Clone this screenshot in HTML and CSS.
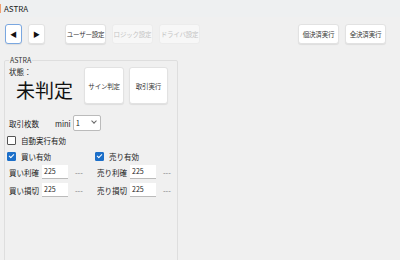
FILE: index.html
```html
<!DOCTYPE html>
<html lang="ja">
<head>
    <meta charset="UTF-8">
    <title>ASTRA</title>
    <link rel="stylesheet" href="styles.css">
</head>
<body>
    <div class="titlebar"><span class="mark"></span>ASTRA</div>
    <div class="toolbar">
        <button class="btn nav focus">&#9664;</button>
        <button class="btn nav">&#9654;</button>
        <button class="btn tool first">ユーザー設定</button>
        <button class="btn tool" disabled>ロジック設定</button>
        <button class="btn tool" disabled>ドライバ設定</button>
        <button class="btn tool right">個決済実行</button>
        <button class="btn tool">全決済実行</button>
    </div>
    <fieldset class="group">
        <legend>ASTRA</legend>
        <div class="top">
            <div class="state">
                <div class="label">状態：</div>
                <div class="big">未判定</div>
            </div>
            <button class="btn square">サイン判定</button>
            <button class="btn square">取引実行</button>
        </div>
        <div class="row lots">
            <span class="label">取引枚数</span>
            <span class="mini">mini</span>
            <span class="select">1<span class="arrow"></span></span>
        </div>
        <div class="row check auto"><span class="box"></span>自動実行有効</div>
        <div class="cols">
            <div class="col">
                <div class="row check"><span class="box on"></span>買い有効</div>
                <div class="row field"><span class="label">買い利確</span><span class="input">225</span><span class="dots">---</span></div>
                <div class="row field"><span class="label">買い損切</span><span class="input">225</span><span class="dots">---</span></div>
            </div>
            <div class="col">
                <div class="row check"><span class="box on"></span>売り有効</div>
                <div class="row field"><span class="label">売り利確</span><span class="input">225</span><span class="dots">---</span></div>
                <div class="row field"><span class="label">売り損切</span><span class="input">225</span><span class="dots">---</span></div>
            </div>
        </div>
    </fieldset>
</body>
</html>
```
FILE: styles.css
```css
body { margin: 0; width: 400px; height: 260px; overflow: hidden; background: #f0f0f0; color: #222; font-family: "Noto Sans CJK JP", "Noto Sans", sans-serif; font-size: 7.5px; }
.titlebar { height: 17px; line-height: 17px; background: #eef0f1; padding-left: 4px; font-size: 8px; position: relative; }
.mark { position: absolute; left: 0; top: 4px; width: 1px; height: 9px; background: #f0a070; }
.toolbar { display: flex; align-items: center; padding: 7px 14px 0 5px; }
.btn { font-family: inherit; font-size: 6.5px; color: #333; background: #fff; border: 1px solid #e2e2e2; border-radius: 3px; box-shadow: 0 1px 1px rgba(0,0,0,0.08); padding: 0; white-space: nowrap; letter-spacing: -0.2px; }
.btn:disabled { color: #c4c4c4; background: #f7f7f7; border-color: #ececec; box-shadow: none; }
.nav { width: 17px; height: 20px; font-size: 7px; color: #111; margin-right: 6px; }
.nav.focus { border-color: #7aa7e0; }
.tool { width: 41px; height: 20px; margin-right: 6px; }
.tool.first { margin-left: 14px; }
.tool.right { margin-left: auto; }
.tool:last-child { margin-right: 0; }
.group { margin: 11px 0 0 4px; width: 174px; min-width: 0; height: 215px; box-sizing: border-box; border: 1px solid #dedede; border-radius: 2px; padding: 0 4px; }
.group legend { font-size: 7px; padding: 0 1px; margin-left: 0; color: #333; }
.top { display: flex; align-items: flex-start; margin-top: 1px; }
.state { width: 79px; }
.label { font-size: 7.5px; }
.big { font-size: 19px; margin: 1px 0 0 7px; line-height: 24px; color: #111; }
.square { width: 41px; height: 37px; margin-right: 5px; margin-top: 1px; }
.row { display: flex; align-items: center; }
.lots { margin-top: 11px; height: 16px; }
.lots .label { width: 46px; }
.mini { margin-right: 2px; }
.select { width: 24px; height: 14px; line-height: 14px; border: 1px solid #bbb; background: #fff; padding-left: 2px; position: relative; border-radius: 2px; }
.arrow { position: absolute; right: 4px; top: 3px; width: 3px; height: 3px; border-right: 1px solid #666; border-bottom: 1px solid #666; transform: rotate(45deg); }
.check { height: 15px; margin-left: -2px; }
.auto { margin-top: 2px; margin-bottom: 2px; }
.col .check { height: 13px; }
.box { width: 7px; height: 7px; border: 1px solid #555; border-radius: 1px; margin-right: 5px; background: #fff; position: relative; }
.box.on { background: #1c6fc9; border-color: #1c6fc9; }
.box.on::after { content: ""; position: absolute; left: 2px; top: 0; width: 2px; height: 4px; border-right: 1px solid #fff; border-bottom: 1px solid #fff; transform: rotate(45deg); }
.cols { display: flex; }
.col { width: 88px; }
.col + .col { width: auto; flex: 1; }
.field { height: 18px; }
.field .label { width: 33px; }
.input { width: 24px; height: 13px; line-height: 13px; background: #fff; border-bottom: 1px solid #bbb; padding-left: 2px; font-size: 7px; }
.dots { margin-left: 7px; color: #777; }
```
